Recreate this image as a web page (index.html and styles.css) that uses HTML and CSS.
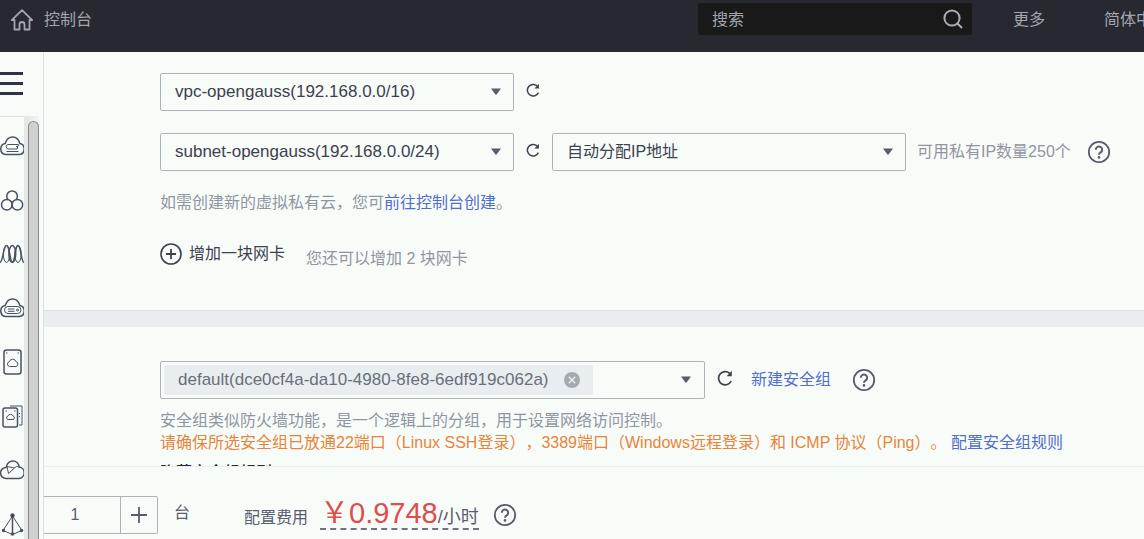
FILE: index.html
```html
<!DOCTYPE html>
<html lang="zh-CN">
<head>
  <meta charset="UTF-8">
  <meta name="viewport" content="width=device-width, initial-scale=1.0">
  <title>控制台</title>
  <link rel="stylesheet" href="styles.css">
</head>
<body>
  <svg class="defs" aria-hidden="true">
    <symbol id="refresh" viewBox="0 0 16 16">
      <path d="M14.2 11A6.6 6.6 0 1 1 12.6 3.300" fill="none" stroke="currentColor" stroke-width="1.7"/>
      <path d="M14.800 .8v5.400H9.600z" fill="currentColor"/>
    </symbol>
    <symbol id="help" viewBox="0 0 24 24">
      <circle cx="12" cy="12" r="10.2" fill="none" stroke="currentColor" stroke-width="1.8"/>
      <path d="M8.8 9.8a3.2 3.2 0 1 1 4.9 2.6c-1.1.7-1.7 1.2-1.7 2.4" fill="none" stroke="currentColor" stroke-width="2"/>
      <circle cx="12" cy="17.4" r="1.3" fill="currentColor"/>
    </symbol>
    <symbol id="caret" viewBox="0 0 10 7">
      <path d="M0 .5h10L5.600 6.600H4.400z" fill="currentColor"/>
    </symbol>
  </svg>

  <header class="topbar">
    <a class="home" href="#">
      <svg class="home-icon" viewBox="0 0 24 24" fill="none" stroke="currentColor" stroke-width="1.8" stroke-linejoin="round" stroke-linecap="round"><path d="M4.500 12v9.500h5v-5a2.500 2.500 0 0 1 5 0v5h5V12M4.500 12.200H1.800L12 2.200l10.200 10h-2.700"/></svg>
      控制台
    </a>
    <form class="search">
      <input type="text" placeholder="搜索" aria-label="搜索">
      <button type="button" aria-label="搜索">
        <svg viewBox="0 0 20 20" fill="none" stroke="currentColor" stroke-width="2"><circle cx="9" cy="9" r="7.6"/><path d="M14.2 14.2 19 19"/></svg>
      </button>
    </form>
    <nav class="topnav">
      <a href="#">更多</a>
      <a href="#">简体中文</a>
    </nav>
  </header>

  <div class="layout">
    <aside class="sidebar">
      <button class="menu" type="button" aria-label="菜单"><span></span><span></span><span></span></button>
      <div class="side-body">
        <nav class="side-icons">
          <a href="#" aria-label="弹性云服务器">
            <svg viewBox="0 0 24 24"><path d="M5.500 20.500a5.600 5.600 0 0 1-.3-11C6.500 5.500 8.500 3 12.500 3s6.300 2.500 7.300 6.500a5.600 5.600 0 0 1-.3 11z"/><path class="thin" d="M8 10.500h10.500l-1.500 4.500H8a2.300 2.300 0 0 1 0-4.500zM6.500 17.500h12M16 12.500h2"/></svg>
          </a>
          <a href="#" aria-label="裸金属服务器">
            <svg viewBox="0 0 24 24"><path d="M8.200 11.800a5.300 5.300 0 1 1 7.800 0"/><circle cx="6.800" cy="16.700" r="5.300"/><circle cx="17.400" cy="16.700" r="5.300"/><path class="thin" d="m9 12 3.100 2 3.100-2M12.100 14v4"/></svg>
          </a>
          <a href="#" aria-label="弹性伸缩">
            <svg viewBox="0 0 24 24"><path d="M0 20.500C3 20 3.500 3.500 6.500 3.500S10 20 12.500 20 15 3.500 18 3.500 21 20 24 20.500"/><ellipse class="thin" cx="6.500" cy="12" rx="3.200" ry="8.500"/><ellipse cx="12.300" cy="12" rx="3.400" ry="8.500"/><ellipse class="thin" cx="18" cy="12" rx="3.200" ry="8.500"/></svg>
          </a>
          <a href="#" aria-label="云容器">
            <svg viewBox="0 0 24 24"><path d="M5.500 20.500a5.600 5.600 0 0 1-.3-11C6.500 5.500 8.500 3 12.500 3s6.300 2.500 7.300 6.500a5.600 5.600 0 0 1-.3 11z"/><path class="thin" d="M8 10.500h9.500a3.500 3.500 0 0 1 0 7H8a3.500 3.500 0 0 1 0-7zM8 13h6.500M8 15.300h6.500"/><circle class="thin" cx="17.500" cy="14" r="1"/></svg>
          </a>
          <a href="#" aria-label="云硬盘">
            <svg viewBox="0 0 24 24"><rect x="4" y="0" width="17" height="24" rx="2.500"/><path class="thin" d="M9.500 16.500a2.400 2.400 0 0 1-.3-4.700 3.600 3.600 0 0 1 6.900 0 2.400 2.400 0 0 1-.2 4.700zM6 3h1.500M17.500 3H19"/></svg>
          </a>
          <a href="#" aria-label="云备份">
            <svg viewBox="0 0 24 24"><rect x="3" y="4" width="14.500" height="19" rx="2"/><path class="thin" d="M10 2h12v19h-3M8 15.500a1.800 1.800 0 0 1 0-3.500 2.700 2.700 0 0 1 5 0 1.800 1.800 0 0 1 0 3.500zM5.500 7H7M14 7h1.500M19.500 9v1M19.500 12v1"/></svg>
          </a>
          <a href="#" aria-label="虚拟私有云">
            <svg viewBox="0 0 24 24"><path d="M6 20.500a5.500 5.500 0 0 1 0-11C7 5.500 9 3 12.800 3c3.500 0 5.700 2.200 6.500 6a5.800 5.800 0 0 1-.3 11.500z"/><path class="thin" d="m7 8.500 1.500 7L14.500 10zM14.500 10c1-1.500 2.500-2 4.800-.9"/></svg>
          </a>
          <a href="#" aria-label="弹性负载均衡">
            <svg viewBox="0 0 24 24"><path class="thin" d="M12.500 4 3 18.500l9.500 4 9.500-4z"/><path d="M12.500 3v18.500"/><circle class="dot" cx="12.500" cy="3.500" r="1.500"/><circle class="dot" cx="3.500" cy="18.500" r="1"/><circle class="dot" cx="21.500" cy="18.500" r="1"/><circle class="dot" cx="12.500" cy="22" r="1"/></svg>
          </a>
        </nav>
        <div class="scrollbar"><div class="thumb"></div></div>
      </div>
    </aside>

    <main class="page">
      <div class="content">
        <section class="panel network">
          <div class="row">
            <div class="select">
              <select aria-label="虚拟私有云"><option>vpc-opengauss(192.168.0.0/16)</option></select>
              <svg><use href="#caret"/></svg>
            </div>
            <button class="refresh" type="button" aria-label="刷新"><svg><use href="#refresh"/></svg></button>
          </div>
          <div class="row">
            <div class="select">
              <select aria-label="子网"><option>subnet-opengauss(192.168.0.0/24)</option></select>
              <svg><use href="#caret"/></svg>
            </div>
            <button class="refresh" type="button" aria-label="刷新"><svg><use href="#refresh"/></svg></button>
            <div class="select ip">
              <select aria-label="IP地址"><option>自动分配IP地址</option></select>
              <svg><use href="#caret"/></svg>
            </div>
            <span class="ip-count">可用私有IP数量250个</span>
            <button class="help" type="button" aria-label="帮助"><svg><use href="#help"/></svg></button>
          </div>
          <p class="hint">如需创建新的虚拟私有云，您可<a href="#">前往控制台创建</a>。</p>
          <div class="add-row">
            <button class="add" type="button">
              <svg viewBox="0 0 22 22" fill="none" stroke="currentColor" stroke-width="1.600"><circle cx="11" cy="11" r="10"/><path d="M11 6v10M6 11h10" stroke-width="1.800"/></svg>
              增加一块网卡
            </button>
            <span class="add-note">您还可以增加 2 块网卡</span>
          </div>
        </section>

        <section class="panel security">
          <div class="row group-row">
            <div class="multi">
              <span class="tag">default(dce0cf4a-da10-4980-8fe8-6edf919c062a)
                <button type="button" aria-label="移除"><svg viewBox="0 0 16 16"><circle cx="8" cy="8" r="8" fill="#a3aab1"/><path d="m4.800 4.800 6.400 6.400M11.200 4.800l-6.400 6.400" stroke="#eef2f2" stroke-width="1.300"/></svg></button>
              </span>
              <button class="open" type="button" aria-label="选择安全组"><svg><use href="#caret"/></svg></button>
            </div>
            <button class="refresh large" type="button" aria-label="刷新"><svg><use href="#refresh"/></svg></button>
            <a class="new-group" href="#">新建安全组</a>
            <button class="help" type="button" aria-label="帮助"><svg><use href="#help"/></svg></button>
          </div>
          <p class="desc">安全组类似防火墙功能，是一个逻辑上的分组，用于设置网络访问控制。</p>
          <p class="warn">请确保所选安全组已放通22端口（Linux SSH登录），3389端口（Windows远程登录）和 ICMP 协议（Ping）。 <a href="#">配置安全组规则</a></p>
          <a class="toggle" href="#">隐藏安全组规则 <svg viewBox="0 0 12 8" fill="none" stroke="currentColor" stroke-width="1.600"><path d="m1 7 5-5 5 5"/></svg></a>
        </section>
      </div>

      <footer class="buybar">
        <div class="stepper">
          <input type="text" value="1" aria-label="购买数量">
          <button type="button" aria-label="增加"><svg viewBox="0 0 16 16" stroke="currentColor" stroke-width="1.800"><path d="M8 0v16M0 8h16"/></svg></button>
        </div>
        <span class="unit">台</span>
        <div class="fee">
          <span class="fee-label">配置费用</span>
          <span class="price"><strong>￥0.9748</strong>/小时</span>
        </div>
        <button class="help" type="button" aria-label="帮助"><svg><use href="#help"/></svg></button>
      </footer>
    </main>
  </div>
</body>
</html>
```
FILE: styles.css
```css
* {
  margin: 0;
  padding: 0;
  box-sizing: border-box;
}
body {
  display: flex;
  flex-direction: column;
  height: 100vh;
  overflow: hidden;
  background: #f8fcf9;
  color: #3c414d;
  font: 16px/22px "Liberation Sans", "Noto Sans CJK SC", sans-serif;
  text-spacing-trim: space-all;
}
button, input, select {
  font: inherit;
  color: inherit;
  background: none;
  border: 0;
}
button {
  display: flex;
  align-items: center;
  cursor: pointer;
}
a {
  color: #526ecc;
  text-decoration: none;
}
svg {
  display: block;
  flex: none;
}
.defs {
  position: absolute;
  width: 0;
  height: 0;
}

/* top bar */
.topbar {
  display: flex;
  align-items: flex-start;
  flex: none;
  height: 52px;
  padding-top: 3px;
  background: #282830;
}
.topbar a {
  color: #a3a7ad;
  white-space: nowrap;
}
.home {
  display: flex;
  align-items: center;
  gap: 10px;
  height: 34px;
  padding-left: 10px;
}
.home-icon {
  width: 24px;
  height: 24px;
}
.search {
  display: flex;
  align-items: center;
  justify-content: space-between;
  width: 274px;
  height: 32px;
  margin-left: auto;
  padding: 0 9px 0 14px;
  background: #191919;
  border-radius: 2px;
  color: #a9adb2;
}
.search input {
  flex: 1;
  min-width: 0;
  padding-top: 2px;
  outline: 0;
}
.search input::placeholder {
  color: #a3a7ad;
}
.search svg {
  width: 20px;
  height: 20px;
}
.topnav {
  display: flex;
  align-items: center;
  gap: 59px;
  flex: none;
  width: 172px;
  height: 34px;
  padding-left: 41px;
  overflow: hidden;
}

/* left menu */
.layout {
  display: flex;
  flex: 1;
  min-height: 0;
}
.sidebar {
  display: flex;
  flex-direction: column;
  flex: none;
  width: 44px;
  border-right: 1px solid #dde1e2;
}
.menu {
  flex-direction: column;
  align-items: flex-start;
  gap: 7px;
  height: 64px;
  padding-top: 20px;
}
.menu span {
  width: 23px;
  height: 3px;
  background: #2c3445;
}
.side-body {
  display: flex;
  flex: 1;
  min-height: 0;
  overflow: hidden;
}
.side-icons {
  display: flex;
  flex-direction: column;
  gap: 30px;
  width: 24px;
  padding-top: 17px;
  border-top: 1px solid #dde1e2;
}
.side-icons svg {
  width: 24px;
  height: 24px;
  fill: none;
  stroke: #4a5262;
  stroke-width: 1.5;
  overflow: visible;
}
.side-icons .thin {
  stroke-width: 1;
}
.side-icons .dot {
  fill: #2c3445;
}
.side-icons a {
  width: 24px;
}
.scrollbar {
  display: flex;
  width: 15px;
  padding: 5px 0 0 4px;
  background: linear-gradient(to right, #e6e8e8 4px, #f3f6f5);
}
.thumb {
  flex: 1;
  border: 1px solid #898989;
  border-bottom: 0;
  border-radius: 6px 6px 0 0;
  background: #cfd1d0;
}

/* form */
.page {
  display: flex;
  flex-direction: column;
  flex: 1;
  min-width: 0;
}
.content {
  flex: 1;
  min-height: 0;
  overflow: hidden;
}
.panel {
  padding-left: 116px;
  white-space: nowrap;
}
.network {
  padding-top: 20px;
  padding-bottom: 40px;
  border-bottom: 1px solid #dce1e2;
}
.row {
  display: flex;
  align-items: center;
  height: 39px;
  margin-bottom: 21px;
}
.select {
  display: grid;
  align-items: center;
  width: 354px;
  height: 38px;
}
.select select,
.select svg {
  grid-area: 1 / 1;
}
.select select {
  appearance: none;
  width: 100%;
  height: 100%;
  padding: 0 32px 0 14px;
  border: 1px solid #adb2bb;
  border-radius: 2px;
  font-size: 17px;
}
.select.ip select {
  font-size: 16px;
}
.select svg,
.open svg {
  width: 10px;
  height: 7px;
  color: #575d6c;
}
.select svg {
  justify-self: end;
  margin-right: 13px;
  pointer-events: none;
}
.refresh {
  width: 38px;
  height: 34px;
  padding: 0 0 4px 12px;
}
.refresh svg {
  width: 14px;
  height: 14px;
}
.refresh.large svg {
  width: 16px;
  height: 16px;
}
.help {
  color: #575d6c;
}
.help svg {
  width: 24px;
  height: 24px;
}
.ip-count {
  margin: 0 16px 0 11px;
  color: #9195a0;
}
.hint {
  color: #9195a0;
}
.add-row {
  display: flex;
  align-items: flex-start;
  gap: 21px;
  margin-top: 25px;
}
.add {
  gap: 7px;
  height: 30px;
}
.add svg {
  width: 22px;
  height: 22px;
}
.add-note {
  padding-top: 9px;
  color: #9195a0;
}
.security {
  padding-top: 33px;
  border-top: 16px solid #e8eeef;
}
.group-row {
  margin-bottom: 11px;
}
.multi {
  display: flex;
  align-items: center;
  justify-content: space-between;
  width: 545px;
  height: 38px;
  padding: 0 3px;
  border: 1px solid #adb2bb;
  border-radius: 2px;
}
.tag {
  display: flex;
  align-items: center;
  gap: 15px;
  height: 30px;
  padding: 0 13px 0 14px;
  background: #e8eeef;
  border-radius: 2px;
  color: #696e7a;
  font-size: 17px;
}
.tag svg {
  width: 16px;
  height: 16px;
}
.open {
  padding: 10px;
}
.new-group {
  margin: 0 21px 0 8px;
}
.desc {
  color: #9195a0;
}
.warn {
  color: #e6853a;
}
.toggle {
  display: flex;
  align-items: center;
  gap: 18px;
  margin-top: 8px;
  color: #282b33;
  font-weight: 500;
}
.toggle svg {
  width: 12px;
  height: 12px;
}

/* purchase bar */
.buybar {
  display: flex;
  align-items: center;
  flex: none;
  height: 73px;
  padding-top: 24px;
  border-top: 1px solid #eceeed;
  color: #575d6c;
  white-space: nowrap;
}
.stepper {
  display: flex;
  align-self: flex-start;
  height: 38px;
  margin-top: 5px;
  border: 1px solid #adb2bb;
  border-left: 0;
  border-radius: 0 2px 2px 0;
}
.stepper input {
  width: 76px;
  padding-right: 14px;
  text-align: center;
}
.stepper button {
  justify-content: center;
  width: 37px;
  border-left: 1px solid #adb2bb;
}
.stepper svg {
  width: 16px;
  height: 16px;
}
.unit {
  margin: 0 54px 4px 16px;
}
.fee {
  display: flex;
  align-items: baseline;
  gap: 12px;
  padding-top: 2px;
}
.price {
  border-bottom: 2px dashed #6d7484;
  font-size: 18px;
}
.price strong {
  color: #e04d4a;
  font-size: 29px;
  font-weight: 400;
}
.buybar .help {
  margin-left: 14px;
}
```
